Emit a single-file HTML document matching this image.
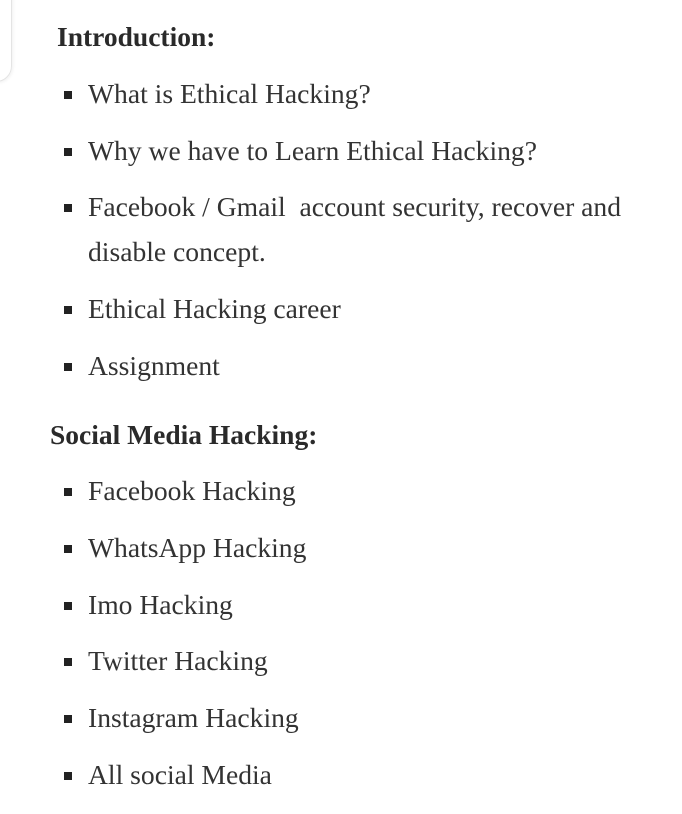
<!DOCTYPE html>
<html><head><meta charset="utf-8"><style>
html,body{margin:0;padding:0;background:#fff;width:682px;height:814px;overflow:hidden;position:relative}
body{font-family:"Liberation Serif",serif;color:#333;font-size:27.6px}
.box{position:absolute;left:-20px;top:-20px;width:30px;height:100px;border:1px solid #e4e4e4;border-radius:0 0 16px 0;box-shadow:1px 1px 3px rgba(0,0,0,.06)}
.t{position:absolute;white-space:nowrap;line-height:45px;height:45px}
.h{font-weight:bold;font-size:27.5px;color:#2a2a2a}
.b{position:absolute;width:8px;height:8px;background:#222}
</style></head><body>
<div class="box"></div>
<div class="t h" style="left:57px;top:14px">Introduction:</div>

<div class="b" style="left:64px;top:91px"></div><div class="t" style="left:88px;top:71px">What is Ethical Hacking?</div>
<div class="b" style="left:64px;top:148px"></div><div class="t" style="left:88px;top:128px">Why we have to Learn Ethical Hacking?</div>
<div class="b" style="left:64px;top:204px"></div><div class="t" style="left:88px;top:184px">Facebook / Gmail&nbsp; account security, recover and</div>
<div class="t" style="left:88px;top:229px">disable concept.</div>
<div class="b" style="left:64px;top:306px"></div><div class="t" style="left:88px;top:286px">Ethical Hacking career</div>
<div class="b" style="left:64px;top:363px"></div><div class="t" style="left:88px;top:343px">Assignment</div>

<div class="t h" style="left:50px;top:412px">Social Media Hacking:</div>

<div class="b" style="left:64px;top:488px"></div><div class="t" style="left:88px;top:468px">Facebook Hacking</div>
<div class="b" style="left:64px;top:545px"></div><div class="t" style="left:88px;top:525px">WhatsApp Hacking</div>
<div class="b" style="left:64px;top:602px"></div><div class="t" style="left:88px;top:582px">Imo Hacking</div>
<div class="b" style="left:64px;top:658px"></div><div class="t" style="left:88px;top:638px">Twitter Hacking</div>
<div class="b" style="left:64px;top:715px"></div><div class="t" style="left:88px;top:695px">Instagram Hacking</div>
<div class="b" style="left:64px;top:772px"></div><div class="t" style="left:88px;top:752px">All social Media</div>
</body></html>
